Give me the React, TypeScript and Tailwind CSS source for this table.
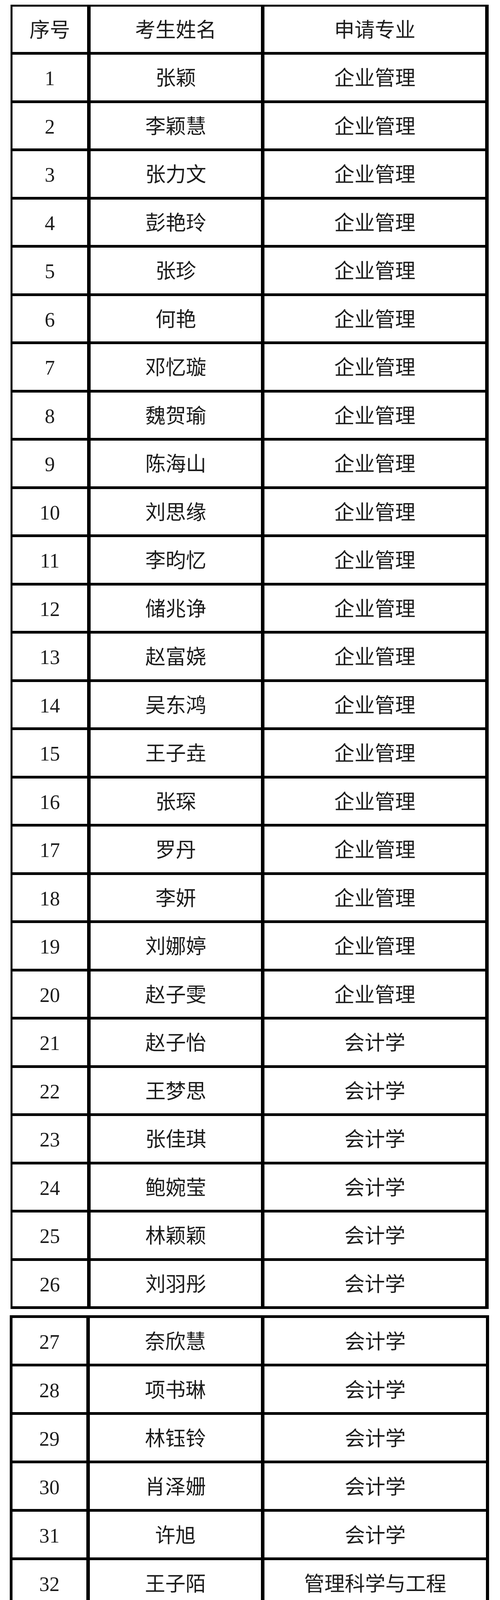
type Row = { no: number; name: string; major: string }

const rows: Row[] = [
  { no: 1, name: '张颖', major: '企业管理' },
  { no: 2, name: '李颖慧', major: '企业管理' },
  { no: 3, name: '张力文', major: '企业管理' },
  { no: 4, name: '彭艳玲', major: '企业管理' },
  { no: 5, name: '张珍', major: '企业管理' },
  { no: 6, name: '何艳', major: '企业管理' },
  { no: 7, name: '邓忆璇', major: '企业管理' },
  { no: 8, name: '魏贺瑜', major: '企业管理' },
  { no: 9, name: '陈海山', major: '企业管理' },
  { no: 10, name: '刘思缘', major: '企业管理' },
  { no: 11, name: '李昀忆', major: '企业管理' },
  { no: 12, name: '储兆诤', major: '企业管理' },
  { no: 13, name: '赵富娆', major: '企业管理' },
  { no: 14, name: '吴东鸿', major: '企业管理' },
  { no: 15, name: '王子垚', major: '企业管理' },
  { no: 16, name: '张琛', major: '企业管理' },
  { no: 17, name: '罗丹', major: '企业管理' },
  { no: 18, name: '李妍', major: '企业管理' },
  { no: 19, name: '刘娜婷', major: '企业管理' },
  { no: 20, name: '赵子雯', major: '企业管理' },
  { no: 21, name: '赵子怡', major: '会计学' },
  { no: 22, name: '王梦思', major: '会计学' },
  { no: 23, name: '张佳琪', major: '会计学' },
  { no: 24, name: '鲍婉莹', major: '会计学' },
  { no: 25, name: '林颖颖', major: '会计学' },
  { no: 26, name: '刘羽彤', major: '会计学' },
  { no: 27, name: '奈欣慧', major: '会计学' },
  { no: 28, name: '项书琳', major: '会计学' },
  { no: 29, name: '林钰铃', major: '会计学' },
  { no: 30, name: '肖泽姗', major: '会计学' },
  { no: 31, name: '许旭', major: '会计学' },
  { no: 32, name: '王子陌', major: '管理科学与工程' },
  { no: 33, name: '乔嘉佳', major: '管理科学与工程' },
  { no: 34, name: '赵允硕', major: '管理科学与工程' },
  { no: 35, name: '王亚辰', major: '管理科学与工程' },
  { no: 36, name: '舒赐强', major: '管理科学与工程' },
  { no: 37, name: '郑棋中', major: '管理科学与工程' },
  { no: 38, name: '赵雪', major: '管理科学与工程' },
  { no: 39, name: '曾国强', major: '管理科学与工程' },
  { no: 40, name: '张卞豪', major: '农林经济管理' },
  { no: 41, name: '尹思颖', major: '农林经济管理' },
  { no: 42, name: '李福东', major: '农村发展' },
  { no: 43, name: '张守天', major: '会计专硕' },
  { no: 44, name: '范可欣', major: '会计专硕' },
  { no: 45, name: '刘晓丽', major: '会计专硕' },
  { no: 46, name: '张嘉欣', major: '会计专硕' },
  { no: 47, name: '文祖月', major: '会计专硕' },
  { no: 48, name: '方志琴', major: '会计专硕' },
  { no: 49, name: '刘美彤', major: '会计专硕' },
  { no: 50, name: '赵嘉琪', major: '会计专硕' }
]

const cellText = "text-[52px] leading-none text-[#1c1c1c] font-['Liberation_Serif','Noto_Sans_CJK_SC',serif]"

function Line({ no, name, major }: { no: React.ReactNode; name: string; major: string }) {
  return (
    <div className="flex h-[123.5px] border-b-[7px] border-black last:h-[116.5px] last:border-b-0">
      <div className="flex w-[200px] shrink-0 items-center justify-center border-r-[9px] border-black pt-[6px]">
        <span className={cellText}>{no}</span>
      </div>
      <div className="flex w-[445px] shrink-0 items-center justify-center border-r-[9px] border-black pt-[6px]">
        <span className={cellText}>{name}</span>
      </div>
      <div className="flex flex-1 items-center justify-center pt-[6px]">
        <span className={cellText}>{major}</span>
      </div>
    </div>
  )
}

export default function App() {
  const first = rows.slice(0, 26)
  const second = rows.slice(26)

  return (
    <div className="h-[6431px] w-[1280px] bg-white pt-[12px]">
      {/* page 1 */}
      <div className="ml-[27px] w-[1224px] border-t-[5px] border-l-[5px] border-r-[9px] border-b-[7px] border-black">
        <div className="flex h-[123px] border-b-[7px] border-black">
          <div className="flex w-[200px] shrink-0 items-center justify-center border-r-[9px] border-black pt-[6px]">
            <span className={cellText}>序号</span>
          </div>
          <div className="flex w-[445px] shrink-0 items-center justify-center border-r-[9px] border-black pt-[6px]">
            <span className={cellText}>考生姓名</span>
          </div>
          <div className="flex flex-1 items-center justify-center pt-[6px]">
            <span className={cellText}>申请专业</span>
          </div>
        </div>
        {first.map((r) => (
          <Line key={r.no} no={r.no} name={r.name} major={r.major} />
        ))}
      </div>

      {/* page 2 */}
      <div className="ml-[25px] mt-[16px] w-[1227px] border-t-[7px] border-l-[7px] border-r-[8px] border-b-[9px] border-black">
        {second.map((r) => (
          <div key={r.no} className="border-b-[7px] border-black last:border-b-0">
            <div className="flex h-[117px]">
              <div className="flex w-[198px] shrink-0 items-center justify-center border-r-[9px] border-black pt-[6px]">
                <span className={cellText}>{r.no}</span>
              </div>
              <div className="flex w-[447px] shrink-0 items-center justify-center border-r-[9px] border-black pt-[6px]">
                <span className={cellText}>{r.name}</span>
              </div>
              <div className="flex flex-1 items-center justify-center pt-[6px]">
                <span className={cellText}>{r.major}</span>
              </div>
            </div>
          </div>
        ))}
      </div>
    </div>
  )
}
